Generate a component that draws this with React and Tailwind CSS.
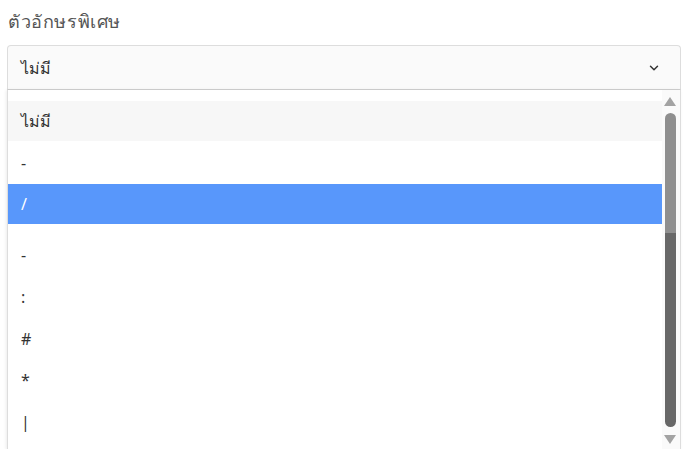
import { ChevronDown } from 'lucide-react'

const options = [
  { label: 'ไม่มี', h: 'h-[40px]', cls: 'bg-[#f7f7f7]' },
  { label: '-', h: 'h-[43px]', cls: '' },
  { label: '/', h: 'h-[40px]', cls: 'bg-[#5897fb] text-white' },
  { label: '-', h: 'h-[52px]', cls: 'pt-[10px]' },
  { label: ':', h: 'h-[42px]', cls: '' },
  { label: '#', h: 'h-[41px]', cls: '' },
  { label: '*', h: 'h-[41px]', cls: '' },
  { label: '|', h: 'h-[43px]', cls: '' },
]

export default function App() {
  return (
    <div className="w-[683px] h-[449px] overflow-hidden bg-white text-[16px] text-[#444] font-['Noto_Sans','DejaVu_Sans',sans-serif]">
      <div className="pl-[7px] pr-[2px] pt-[9px]">
        {/* Label */}
        <div className="pl-[1px] h-[36px] leading-[24px] text-[18px] tracking-[0.6px] text-[#555]">ตัวอักษรพิเศษ</div>

        {/* Select */}
        <div className="h-[45px] flex items-center justify-between pl-[13px] pr-[19px] border border-[#ddd] border-b-[#d0d0d0] rounded-t-[4px] bg-[#fafafa]">
          <span className="text-[#333]">ไม่มี</span>
          <ChevronDown className="h-[14px] w-[14px] text-[#333]" strokeWidth={2.5} />
        </div>

        {/* Dropdown list */}
        <div className="flex h-[360px] border-l border-r border-[#ddd] bg-white shadow-[-1px_0_3px_rgba(0,0,0,0.08)]">
          <ul className="flex-1 pt-[11px] text-[#333]">
            {options.map((o, i) => (
              <li key={i} className={`${o.h} flex items-center pl-[13px] ${o.cls}`}>
                {o.label}
              </li>
            ))}
          </ul>

          {/* Scrollbar */}
          <div className="w-[18px] bg-[#fafafa] flex flex-col items-center pt-[7px] pr-[2px]">
            <div className="w-0 h-0 border-l-[6px] border-r-[6px] border-b-[9px] border-l-transparent border-r-transparent border-b-[#a3a3a3]" />
            <div className="mt-[7px] w-[11px] h-[314px] rounded-full overflow-hidden flex flex-col">
              <div className="h-[120px] bg-[#8f8f8f]" />
              <div className="flex-1 bg-[#676767]" />
            </div>
            <div className="mt-[8px] w-0 h-0 border-l-[6px] border-r-[6px] border-t-[9px] border-l-transparent border-r-transparent border-t-[#a3a3a3]" />
          </div>
        </div>
      </div>
    </div>
  )
}
